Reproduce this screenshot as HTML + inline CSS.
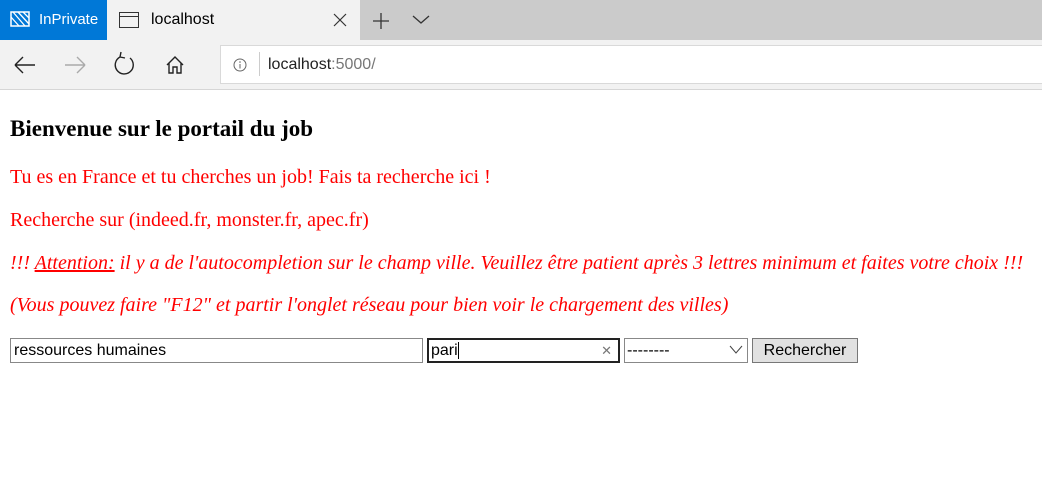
<!DOCTYPE html>
<html><head><style>
body{margin:0;width:1042px;height:486px;overflow:hidden;background:#fff;font-family:"Liberation Serif",serif;position:relative}
.a{position:absolute}
.red{color:#f00;font-size:20px;white-space:nowrap;left:10px}
</style></head><body>
<div class="a" style="left:0;top:0;width:1042px;height:40px;background:#cbcbcb"></div>
<div class="a" style="left:0;top:0;width:107px;height:40px;background:#0078d7;color:#fff;font:15px 'Liberation Sans',sans-serif">
<svg class="a" style="left:10px;top:11px" width="20" height="16" viewBox="0 0 20 16"><rect x="1" y="1" width="18" height="14" fill="none" stroke="#fff" stroke-width="1.5"/><path d="M3 1L15 15M8 1L19 13M1 6L9 15M13 1L19 7" stroke="#fff" stroke-width="1.3"/></svg>
<span class="a" style="left:39px;top:11px">InPrivate</span></div>
<div class="a" style="left:107px;top:0;width:253px;height:40px;background:#f2f2f2;font:16px 'Liberation Sans',sans-serif">
<svg class="a" style="left:12px;top:12px" width="20" height="16"><rect x="0.5" y="0.5" width="19" height="15" fill="none" stroke="#333"/><line x1="0" y1="4.5" x2="20" y2="4.5" stroke="#333"/></svg>
<span class="a" style="left:44px;top:11px;color:#000">localhost</span>
<svg class="a" style="left:226px;top:13px" width="14" height="14"><path d="M1 1L13 13M13 1L1 13" stroke="#333" stroke-width="1.2"/></svg></div>
<svg class="a" style="left:372px;top:12px" width="18" height="18"><path d="M9 1V17M1 9H17" stroke="#333" stroke-width="1.3"/></svg>
<svg class="a" style="left:412px;top:15px" width="18" height="10"><path d="M1 1L9 8L17 1" fill="none" stroke="#333" stroke-width="1.3"/></svg>
<div class="a" style="left:0;top:40px;width:1042px;height:49px;background:#f2f2f2;border-bottom:1px solid #d6d6d6"></div>
<svg class="a" style="left:0;top:40px" width="220" height="49" fill="none" stroke-width="1.4">
<path d="M15 25H35M15 25L23 17M15 25L23 33" stroke="#222"/>
<path d="M65 25H85M85 25L77 17M85 25L77 33" stroke="#aaa"/>
<path d="M120 17A9 9 0 1 0 130 18M120 17L121 12M120 17L125 18" stroke="#222"/>
<path d="M167 25L175 17L183 25M169 23V33H173V27H177V33H181V23" stroke="#222"/>
</svg>
<div class="a" style="left:220px;top:45px;width:830px;height:37px;background:#fff;border:1px solid #d9d9d9;font:16px 'Liberation Sans',sans-serif">
<svg class="a" style="left:12px;top:12px" width="14" height="14"><circle cx="7" cy="7" r="6" fill="none" stroke="#666"/><line x1="7" y1="6" x2="7" y2="10.5" stroke="#666"/><circle cx="7" cy="4" r=".8" fill="#666"/></svg>
<div class="a" style="left:38px;top:6px;width:1px;height:24px;background:#ccc"></div>
<span class="a" style="left:47px;top:10px;color:#222">localhost<span style="color:#777">:5000/</span></span></div>
<div class="a" style="left:10px;top:116px;font-size:23px;font-weight:bold;white-space:nowrap">Bienvenue sur le portail du job</div>
<div class="a red" style="top:166px">Tu es en France et tu cherches un job! Fais ta recherche ici !</div>
<div class="a red" style="top:209px">Recherche sur (indeed.fr, monster.fr, apec.fr)</div>
<div class="a red" style="top:252px;font-style:italic">!!! <u>Attention:</u> il y a de l'autocompletion sur le champ ville. Veuillez être patient après 3 lettres minimum et faites votre choix !!!</div>
<div class="a red" style="top:294px;font-style:italic">(Vous pouvez faire "F12" et partir l'onglet réseau pour bien voir le chargement des villes)</div>
<div class="a" style="left:10px;top:338px;width:408px;height:23px;border:1px solid #888;font:16px 'Liberation Sans',sans-serif;line-height:23px;padding-left:3px">ressources humaines</div>
<div class="a" style="left:427px;top:338px;width:187px;height:21px;border:2px solid #222;font:16px 'Liberation Sans',sans-serif;line-height:21px;padding-left:2px">pari<span style="border-left:1px solid #000"></span><span class="a" style="right:6px;top:0;color:#777;font-size:13px">✕</span></div>
<div class="a" style="left:624px;top:338px;width:120px;height:23px;border:1px solid #888;font:16px 'Liberation Sans',sans-serif;line-height:23px;padding-left:2px">--------
<svg class="a" style="right:4px;top:6px" width="14" height="9"><path d="M1 1L7 8L13 1" fill="none" stroke="#444"/></svg></div>
<div class="a" style="left:752px;top:338px;width:104px;height:23px;border:1px solid #777;background:#e1e1e1;font:16px 'Liberation Sans',sans-serif;line-height:23px;text-align:center">Rechercher</div>
</body></html>
